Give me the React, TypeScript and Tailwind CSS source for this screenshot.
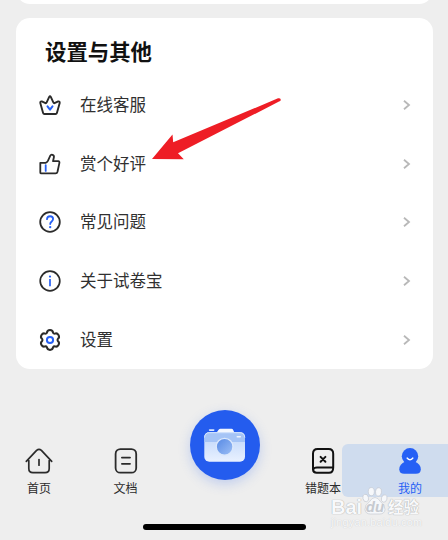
import type { ReactNode } from "react"

type Row = {
  label: string
  icon: ReactNode
}

const DARK = "#2b2b2b"
const BLUE = "#2660f5"

const CrownIcon = () => (
  <svg className="h-6 w-6" viewBox="0 0 24 24" fill="none" strokeWidth={1.9} strokeLinecap="round" strokeLinejoin="round">
    <path d="M6.4 21Q5.4 21 5.1 20L2.3 10Q2.1 8.1 3.8 8.4L7.5 10.2Q8.4 10.2 8.8 9.2L11.2 3.9Q12 2.5 12.8 3.9L15.2 9.2Q15.6 10.2 16.5 10.2L20.2 8.4Q21.9 8.1 21.7 10L18.9 20Q18.6 21 17.6 21Z" stroke={DARK} />
    <path d="M9.5 13.4L12 16.7L14.5 13.4" stroke={BLUE} strokeWidth={2} />
  </svg>
)

const ThumbIcon = () => (
  <svg className="h-6 w-6" viewBox="0 0 24 24" fill="none" strokeWidth={1.8} strokeLinecap="round" strokeLinejoin="round">
    <path d="M2.3 10.8H7.6Q9.1 10.4 9.9 8.9L12.3 3.7Q13 2.3 14.5 2.8Q16.3 3.5 15.9 5.3L15 9.2H20.2Q21.7 9.4 21.4 10.9L19.5 19.8Q19.1 21.4 17.6 21.4H3.3Q2.3 21.4 2.3 20.4Z" stroke={DARK} />
    <path d="M7.7 13.1V18.9" stroke={BLUE} />
  </svg>
)

const QuestionIcon = () => (
  <svg className="h-6 w-6" viewBox="0 0 24 24" fill="none" strokeWidth={1.8} strokeLinecap="round">
    <circle cx="12" cy="12" r="9.8" stroke={DARK} />
    <path d="M9 9.2C9.1 5.2 15.1 5.3 15.1 9.1C15.1 11.5 12.2 11.4 12.2 14" stroke={BLUE} />
    <circle cx="12.2" cy="17.1" r="1.2" fill={BLUE} />
  </svg>
)

const InfoIcon = () => (
  <svg className="h-6 w-6" viewBox="0 0 24 24" fill="none" strokeWidth={1.7}>
    <circle cx="12" cy="12" r="9.8" stroke={DARK} />
    <path d="M12 10V17.2" stroke={BLUE} />
    <circle cx="12" cy="7.6" r="1.1" fill={BLUE} />
  </svg>
)

const GearIcon = () => (
  <svg className="h-6 w-6" viewBox="0 0 24 24" fill="none" strokeWidth={2} strokeLinejoin="round">
    <path d="M8.9 4.8C9.3 1.2 14.7 1.2 15.1 4.8Q15.5 5.7 16.7 5.7C19.9 4.2 22.6 8.9 19.8 11Q19.2 12 19.8 13C22.6 15.1 19.9 19.8 16.7 18.3Q15.5 18.3 15.1 19.2C14.7 22.8 9.3 22.8 8.9 19.2Q8.5 18.3 7.3 18.3C4.1 19.8 1.4 15.1 4.2 13Q4.8 12 4.2 11C1.4 8.9 4.1 4.2 7.3 5.7Q8.5 5.7 8.9 4.8Z" stroke={DARK} />
    <circle cx="12" cy="12" r="3.1" stroke={BLUE} />
  </svg>
)

const HomeIcon = () => (
  <svg className="h-7 w-7" viewBox="0 0 28 28" fill="none" stroke={DARK} strokeWidth={1.7} strokeLinecap="round" strokeLinejoin="round">
    <path d="M1.3 14.3L11.6 3.4Q14 1.3 16.4 3.4L26.7 14.3M3.8 13.5V21.5Q3.8 25.6 7.9 25.6H20.1Q24.2 25.6 24.2 21.5V13.5" />
    <path d="M14 12.6V18.2" />
  </svg>
)

const DocIcon = () => (
  <svg className="h-7 w-7" viewBox="0 0 28 28" fill="none" stroke={DARK} strokeWidth={1.8} strokeLinecap="round">
    <rect x="3.6" y="2.1" width="20.6" height="23.6" rx="4.8" />
    <path d="M9.9 10.6H18M9.9 16.8H18" />
  </svg>
)

const BookIcon = () => (
  <svg className="h-7 w-7" viewBox="0 0 28 28" fill="none" stroke="#111" strokeWidth={2} strokeLinecap="round" strokeLinejoin="round">
    <path d="M24.2 20.5V6.8Q24.2 2.1 19.6 2.1H8.6Q4 2.1 4 6.8V22.4Q4.2 25.8 7.6 25.8H20Q24.2 25.8 24.2 20.5ZM4.2 22.6Q4.8 20.4 8 20.4H23.6" />
    <path d="M11.6 9.9L16.4 14.7M16.4 9.9L11.6 14.7" />
  </svg>
)

const UserIcon = () => (
  <svg className="h-7 w-7" viewBox="0 0 28 28" fill={BLUE}>
    <circle cx="14" cy="9.3" r="8.2" />
    <path d="M9.3 14.6Q3.3 17.4 3.3 22.2Q3.3 26.7 8.2 26.7H19.9Q24.8 26.7 24.8 22.2Q24.8 17.4 18.7 14.6Z" />
    <path d="M11.3 11.2Q14 14.2 16.7 11.2" fill="none" stroke="#fff" strokeWidth={1.6} strokeLinecap="round" />
  </svg>
)

const CameraIcon = () => (
  <svg className="h-[70px] w-[70px]" viewBox="0 0 70 70">
    <defs>
      <linearGradient id="body" x1="0" y1="0" x2="0" y2="1">
        <stop offset="0" stopColor="#bcd4fa" />
        <stop offset="1" stopColor="#e9f1ff" />
      </linearGradient>
      <linearGradient id="lens" x1="0" y1="0" x2="1" y2="1">
        <stop offset="0" stopColor="#5588e4" />
        <stop offset="1" stopColor="#9ec0f6" />
      </linearGradient>
    </defs>
    <rect x="18.8" y="19.2" width="5.7" height="1.7" rx="0.8" fill="#d9e7ff" />
    <path d="M26.5 22.8L28.6 19.8Q29.3 18.8 30.4 18.8H41.5Q42.7 18.8 43.2 19.9L44.4 22.8Z" fill="#f3f7ff" />
    <rect x="14.3" y="22.3" width="40.7" height="29.5" rx="5" fill="url(#body)" />
    <path d="M14.3 32V27.3Q14.3 22.3 19.3 22.3H50Q55 22.3 55 27.3V32Z" fill="#a5c4f6" />
    <path d="M14.5 27.5Q15 22.7 19.3 22.7H50Q54.3 22.7 54.8 27.5" fill="none" stroke="#e2edff" strokeWidth="0.8" />
    <circle cx="34.6" cy="36.8" r="8.4" fill="url(#lens)" stroke="#dbe8fc" strokeWidth="1.4" />
    <rect x="46.5" y="26" width="4.5" height="1.5" rx="0.7" fill="#edf4ff" />
  </svg>
)

const rows: Row[] = [
  { label: "在线客服", icon: <CrownIcon /> },
  { label: "赏个好评", icon: <ThumbIcon /> },
  { label: "常见问题", icon: <QuestionIcon /> },
  { label: "关于试卷宝", icon: <InfoIcon /> },
  { label: "设置", icon: <GearIcon /> },
]

function Tab({ label, icon }: { label: string; icon: ReactNode }) {
  return (
    <div className="flex flex-col items-center pt-[37px] text-[#2b2b2b]">
      {icon}
      <span className="mt-[4px] text-[12px] leading-[18px] whitespace-nowrap">{label}</span>
    </div>
  )
}

function Watermark() {
  return (
    <div className="absolute top-[487px] left-[331px] w-[92px] text-[#f8f9fb]">
      <div className="flex h-[28px] items-end font-['Liberation_Sans'] text-[20px] leading-[16px] font-bold [text-shadow:0_0_1px_#a8a8a8,0_0_1px_#bdbdbd]">
        <span className="w-[31px]">Bai</span>
        <span className="relative flex h-[28px] w-[26px] items-end justify-center">
          <svg className="absolute top-0 left-0 h-[28px] w-[26px]" viewBox="0 0 26 28" fill="#f6f8fb" stroke="#c0c4cc" strokeWidth={0.6}>
            <ellipse cx="3.7" cy="11" rx="2.8" ry="3.8" transform="rotate(-15 3.7 11)" />
            <ellipse cx="9.3" cy="4.6" rx="3" ry="4.1" />
            <ellipse cx="16.5" cy="4.9" rx="3" ry="4.2" transform="rotate(10 16.5 4.9)" />
            <ellipse cx="22.2" cy="11.5" rx="2.8" ry="3.8" transform="rotate(15 22.2 11.5)" />
            <path d="M13 10.5Q16 10.5 18.5 14.7Q23.4 18 23 22.6Q22.5 27 17.5 27H8.5Q3.5 27 3 22.6Q2.6 18 7.5 14.7Q10 10.5 13 10.5Z" />
          </svg>
          <span className="relative text-[15px] leading-[16px] text-[#c6cad0] italic [text-shadow:none]">du</span>
        </span>
        <span className="font-['Noto_Sans_CJK_SC',sans-serif] text-[15.5px] leading-[18px] whitespace-nowrap">经验</span>
      </div>
      <div className="font-['Liberation_Sans'] text-[10.8px] leading-[14px] tracking-[0.25px] whitespace-nowrap [text-shadow:0_0_1px_#bdbdbd]">
        jingyan.baidu.com
      </div>
    </div>
  )
}

export default function App() {
  return (
    <div className="relative h-[540px] w-[448px] overflow-hidden bg-[#eeeeee] font-['Noto_Sans_CJK_SC',sans-serif]">
      <div className="mr-[15px] ml-4 h-[3.5px] overflow-hidden">
        <div className="-mt-5 h-[23.5px] rounded-b-[14px] bg-white" />
      </div>

      <section className="mt-[14px] mr-[15px] ml-4 h-[351px] rounded-[14px] bg-white pt-[17px]">
        <h1 className="pl-[29px] text-[21.4px] leading-8 font-bold text-[#111]">设置与其他</h1>
        <ul className="mt-[9px]">
          {rows.map((row) => (
            <li key={row.label} className="flex h-[58.7px] items-center pr-[22px] pl-[22px]">
              {row.icon}
              <span className="mb-[2px] ml-[18px] text-[16.5px] leading-6 text-[#303030]">{row.label}</span>
              <svg className="ml-auto h-[12px] w-[9px]" viewBox="0 0 9 12" fill="none" stroke="#b8b8b8" strokeWidth={1.8}>
                <path d="M2 1.7L7 6L2 10.3" />
              </svg>
            </li>
          ))}
        </ul>
      </section>

      <nav className="mt-[41.5px] grid h-[114px] grid-cols-[78px_95px_103px_94px_78px]">
        <Tab label="首页" icon={<HomeIcon />} />
        <Tab label="文档" icon={<DocIcon />} />
        <div className="flex justify-center">
          <div className="h-[70px] w-[70px] rounded-full bg-[#245cee] shadow-[0_4px_12px_rgba(60,110,240,0.25)]">
            <CameraIcon />
          </div>
        </div>
        <Tab label="错题本" icon={<BookIcon />} />
        <div className="relative">
          <div className="absolute top-[34px] -left-[28px] h-[53px] w-[112px] rounded-[6px] bg-[#cfdcee]" />
          <div className="relative flex flex-col items-center pt-[37px] pl-[2px] text-[#2660f5]">
            <UserIcon />
            <span className="mt-[4px] text-[12px] leading-[18px]">我的</span>
          </div>
        </div>
      </nav>
      <div className="ml-[143px] h-[6px] w-[163px] rounded-full bg-black" />

      {/* pointer to the review row */}
      <svg className="absolute top-[90px] left-[140px] h-[80px] w-[150px]" viewBox="0 0 150 80" fill="#ee1d25">
        <path d="M12 69L32.5 44.5L33.2 52.3L138 8.3Q140.5 8 140.7 9.6Q141 10.8 139 11.6L38 63.3L43.8 69.3Z" />
      </svg>

      <Watermark />
    </div>
  )
}
